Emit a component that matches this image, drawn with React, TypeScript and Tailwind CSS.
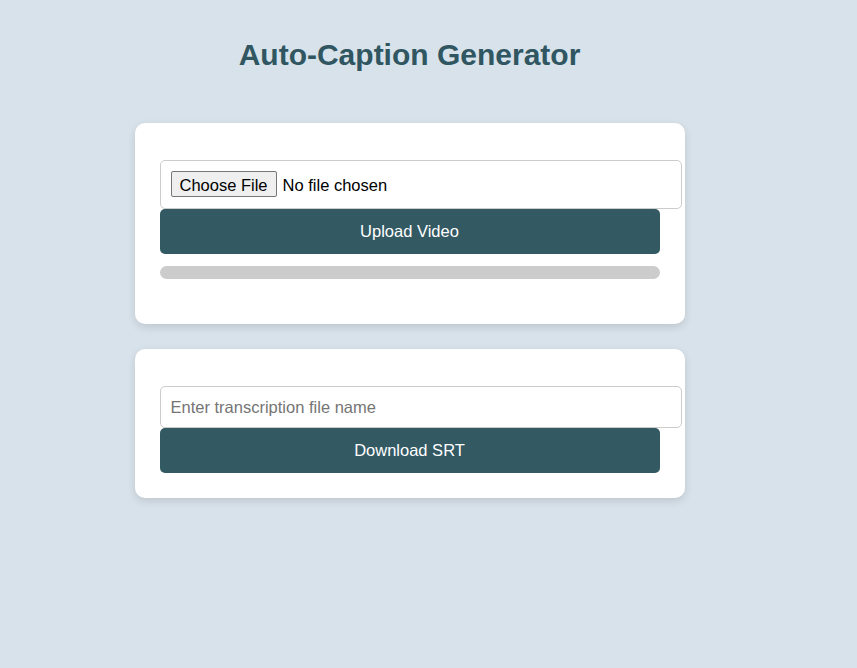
export default function App() {
  return (
    <div className="min-h-[668px] bg-[#d8e2ea] font-['Liberation_Sans',Arial,sans-serif] pr-[38px] pt-[38px] flex flex-col items-center">
      <h1 className="text-[30px] leading-[34px] font-bold text-[#2f5661]">Auto-Caption Generator</h1>

      {/* upload card */}
      <div className="mt-[51px] w-[550px] bg-white rounded-[10px] shadow-[0_3px_8px_rgba(0,0,0,0.12)] px-[25px] pt-[37px] pb-[45px]">
        <input
          type="file"
          className="block w-[522px] h-[49px] border border-[#cccccc] rounded-[5px] px-[10px] py-[10px] text-[16.5px] text-black bg-white file:border file:border-[#767676] file:bg-[#efefef] file:rounded-[2px] file:px-[8px] file:py-[1px] file:h-[26px] file:mr-[6px] file:text-black"
        />
        <button className="w-[500px] h-[45px] bg-[#335963] text-white text-[16.5px] rounded-[5px]">
          Upload Video
        </button>
        <div className="mt-[12px] w-[500px] h-[13px] rounded-full bg-[#cccccc]" />
      </div>

      {/* download card */}
      <div className="mt-[25px] w-[550px] bg-white rounded-[10px] shadow-[0_3px_8px_rgba(0,0,0,0.12)] px-[25px] pt-[37px] pb-[25px]">
        <input
          type="text"
          placeholder="Enter transcription file name"
          className="block w-[522px] h-[42px] border border-[#cccccc] rounded-[5px] px-[10px] text-[16.5px] text-black placeholder:text-[#757575] outline-none"
        />
        <button className="w-[500px] h-[45px] bg-[#335963] text-white text-[16.5px] rounded-[5px]">
          Download SRT
        </button>
      </div>
    </div>
  );
}
